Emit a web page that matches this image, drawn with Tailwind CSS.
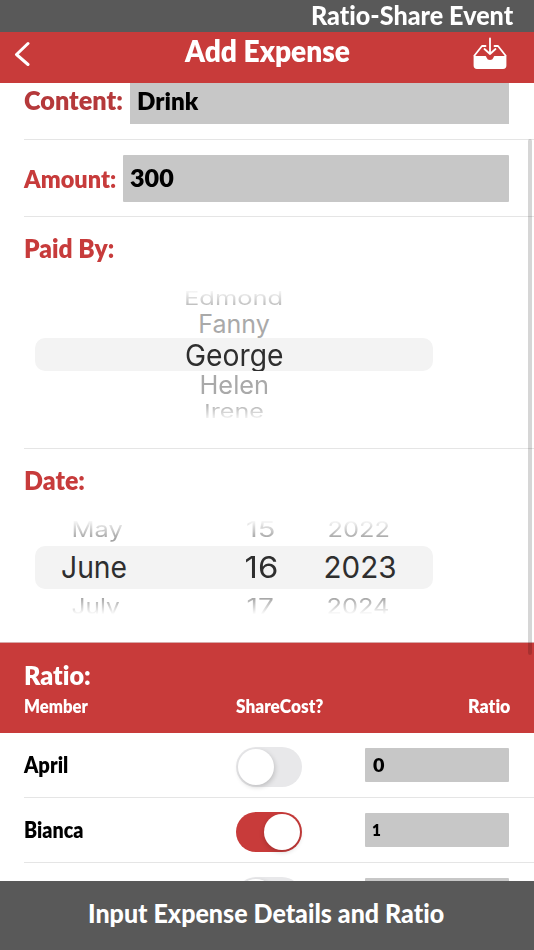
<!DOCTYPE html>
<html lang="en">
<head>
    <meta charset="UTF-8">
    <meta name="viewport" content="width=device-width, initial-scale=1.0">
    <title>Add Expense</title>
    <script src="https://cdn.jsdelivr.net/npm/@tailwindcss/browser@4"></script>
</head>
<body class="bg-white">

    <div class="w-[534px] h-[950px] flex flex-col overflow-hidden relative font-['Lato',sans-serif] font-extrabold whitespace-nowrap [font-variant-ligatures:none]">

        <!-- Event bar -->
        <div class="h-8 shrink-0 bg-[#595959] text-white flex items-start justify-end pr-[21px]">
            <span class="fit text-[26px] leading-[31px] font-black inline-block origin-right" data-w="202">Ratio-Share Event</span>
        </div>

        <!-- Title bar -->
        <div class="h-[51px] shrink-0 bg-[#c83b3a] text-white flex pl-[14px] pr-[27px] z-10">
            <svg class="w-4 h-[26px] mt-[9px]" viewBox="0 0 16 26" fill="none" stroke="white" stroke-width="3" stroke-linecap="round" stroke-linejoin="round">
                <path d="M14 2.500 2.500 13.500 14 23.500" />
            </svg>
            <h1 class="ml-[155px] text-[30px] leading-[37px]"><span class="fit inline-block origin-left" data-w="165">Add Expense</span></h1>
            <svg class="w-[34px] h-[34px] mt-[4px] ml-auto" viewBox="0 0 34 34" fill="none" stroke="white" stroke-width="1.8" stroke-linecap="round" stroke-linejoin="round">
                <path d="M17 2.500v15.500M11.500 13l5.500 5 5.500-5" />
                <path d="M12.500 10H9L1.500 19.500M21.500 10H25l7.500 9.500" />
                <path d="M1.500 20H12c1 0 1.200.5 1.500 1.500a3.700 3.700 0 0 0 7 0c.3-1 .5-1.500 1.500-1.500h10.500v9.500a2.500 2.500 0 0 1-2.500 2.500H4a2.500 2.500 0 0 1-2.500-2.500z" fill="white" stroke="none" />
                <path d="M1.500 20v9.500A2.500 2.500 0 0 0 4 32h26a2.500 2.500 0 0 0 2.500-2.500V20" />
            </svg>
        </div>

        <!-- Form -->
        <div class="flex-1 min-h-0 overflow-hidden">
            <div class="h-[56px] pl-6 pr-[25px] flex items-start">
                <label class="w-[106px] text-[27px] leading-[34px] text-[#b5393b]"><span class="fit inline-block origin-left" data-w="99">Content:</span></label>
                <div class="flex-1 h-[41px] bg-[#c7c7c7] pl-[7px] text-[25px] leading-[35px]"><span class="fit inline-block origin-left" data-w="61">Drink</span></div>
            </div>
            <div class="ml-6 border-t border-[#e5e5e5] h-[77px] pr-[25px] pt-[15px] flex items-start">
                <label class="w-[99px] text-[25px] leading-[46px] text-[#c73b3b]"><span class="fit inline-block origin-left" data-w="92">Amount:</span></label>
                <div class="flex-1 h-[47px] bg-[#c7c7c7] rounded-[1px] pl-[7px] text-[24px] leading-[46px]"><span class="fit inline-block origin-left" data-w="44">300</span></div>
            </div>

            <!-- Payer wheel -->
            <div class="ml-6 border-t border-[#e5e5e5] h-[232px] pt-[13px]">
                <div class="text-[27px] leading-9 text-[#c73b3b]"><span class="fit inline-block origin-left" data-w="90">Paid By:</span></div>
                <div class="ml-[11px] mt-[22px] w-[398px] h-[134px] overflow-hidden flex flex-col items-center font-['Inter',sans-serif] font-normal">
                    <div class="h-[22px] flex items-center"><span class="fit block text-[26px] leading-8 text-transparent bg-clip-text bg-linear-to-b from-white from-5% to-[#bcbcbc] to-80%" data-w="99" data-y="0.72">Edmond</span></div>
                    <div class="h-[28px] flex items-center"><span class="fit block text-[25px] leading-8 text-[#a9a9a9]" data-w="71">Fanny</span></div>
                    <div class="w-full h-[33px] bg-[#f3f3f3] rounded-[10px] flex justify-center overflow-hidden"><span class="fit block text-[30px] leading-[34px] text-[#2e2e2e]" data-w="99">George</span></div>
                    <div class="h-[28px] flex items-center"><span class="fit block text-[25px] leading-8 text-[#a9a9a9]" data-w="70">Helen</span></div>
                    <div class="h-[22px] flex items-center"><span class="fit block text-[26px] leading-8 translate-y-[2px] text-transparent bg-clip-text bg-linear-to-b from-[#b4b4b4] from-20% to-white to-90%" data-w="60" data-y="0.72">Irene</span></div>
                </div>
            </div>

            <!-- Date wheels -->
            <div class="ml-6 border-t border-[#e5e5e5] h-[194px] pt-[13px]">
                <div class="text-[27px] leading-9 text-[#c73b3b]"><span class="fit inline-block origin-left" data-w="61">Date:</span></div>
                <div class="ml-[11px] mt-[21px] w-[398px] h-[96px] overflow-hidden font-['Inter',sans-serif] font-normal">
                    <div class="h-[27px] grid grid-cols-[124px_205px_69px] items-center text-[25px] leading-8 text-transparent">
                        <div class="flex justify-center"><span class="fit block translate-y-[-6px] bg-clip-text bg-linear-to-b from-white from-15% to-[#a4a4a4] to-85%" data-w="51" data-y="0.85">May</span></div>
                        <div class="flex justify-center"><span class="fit block translate-y-[-6px] translate-x-[-1px] bg-clip-text bg-linear-to-b from-white from-15% to-[#a4a4a4] to-85%" data-w="29" data-y="0.85">15</span></div>
                        <div class="flex justify-center"><span class="fit block translate-y-[-6px] translate-x-[-40px] bg-clip-text bg-linear-to-b from-white from-15% to-[#a4a4a4] to-85%" data-w="63" data-y="0.85">2022</span></div>
                    </div>
                    <div class="h-[43px] bg-[#f3f3f3] rounded-[10px] grid grid-cols-[124px_205px_69px] items-center text-[30px] leading-[43px] text-[#2e2e2e]">
                        <div class="flex justify-center"><span class="fit block translate-x-[-3px]" data-w="66">June</span></div>
                        <div class="flex justify-center"><span class="fit block" data-w="34">16</span></div>
                        <div class="flex justify-center"><span class="fit block translate-x-[-38px]" data-w="73">2023</span></div>
                    </div>
                    <div class="h-[26px] grid grid-cols-[124px_205px_69px] items-center text-[25px] leading-8 text-transparent">
                        <div class="flex justify-center"><span class="fit block translate-y-[1px] translate-x-[-1px] bg-clip-text bg-linear-to-b from-[#9c9c9c] from-15% to-white to-80%" data-w="48" data-y="0.88">July</span></div>
                        <div class="flex justify-center"><span class="fit block translate-y-[1px] translate-x-[-1px] bg-clip-text bg-linear-to-b from-[#9c9c9c] from-15% to-white to-80%" data-w="27" data-y="0.88">17</span></div>
                        <div class="flex justify-center"><span class="fit block translate-y-[1px] translate-x-[-40px] bg-clip-text bg-linear-to-b from-[#9c9c9c] from-15% to-white to-80%" data-w="63" data-y="0.88">2024</span></div>
                    </div>
                </div>
            </div>

            <!-- Ratio header -->
            <div class="h-[91px] bg-[#c83b3a] border-t border-[#d8a9a9] text-white pl-6 pr-6 pt-[14px]">
                <div class="text-[27px] leading-9"><span class="fit inline-block origin-left" data-w="67">Ratio:</span></div>
                <div class="grid grid-cols-[212px_1fr_auto] text-[19px] leading-[26px]">
                    <div><span class="fit inline-block origin-left" data-w="64">Member</span></div>
                    <div><span class="fit inline-block origin-left" data-w="87">ShareCost?</span></div>
                    <div><span class="fit inline-block origin-right" data-w="42">Ratio</span></div>
                </div>
            </div>

            <!-- Member rows -->
            <div class="h-[64px] pl-6 pr-[25px] flex items-start">
                <div class="w-[212px] text-[22px] leading-[64px]"><span class="fit inline-block origin-left" data-w="44">April</span></div>
                <div class="mt-[14px] w-[66px] h-10 rounded-full bg-[#e8e8ea] p-[2px]">
                    <div class="size-9 rounded-full bg-white shadow-[1px_2px_5px_rgba(0,0,0,0.18)]"></div>
                </div>
                <div class="ml-auto mt-[15px] w-36 h-[34px] rounded-[1px] bg-[#c7c7c7] pl-2 text-[18px] leading-[34px]"><span class="fit inline-block origin-left" data-w="11">0</span></div>
            </div>
            <div class="ml-6 border-t border-[#e5e5e5] h-[65px] pr-[25px] flex items-start">
                <div class="w-[212px] text-[22px] leading-[64px]"><span class="fit inline-block origin-left" data-w="59">Bianca</span></div>
                <div class="mt-[14px] w-[66px] h-10 rounded-full bg-[#c83b3a] p-[2px] flex justify-end">
                    <div class="size-9 rounded-full bg-white shadow-[0_2px_5px_rgba(0,0,0,0.18)]"></div>
                </div>
                <div class="ml-auto mt-[15px] w-36 h-[34px] rounded-[1px] bg-[#c7c7c7] pl-[7px] text-[17px] leading-[33px]"><span class="fit inline-block origin-left" data-w="9">1</span></div>
            </div>
            <div class="ml-6 border-t border-[#e5e5e5] h-[65px] pr-[25px] flex items-start">
                <div class="ml-[212px] mt-[14px] w-[66px] h-10 rounded-full bg-[#e8e8ea] p-[2px]">
                    <div class="size-9 rounded-full bg-white shadow-[1px_2px_5px_rgba(0,0,0,0.18)]"></div>
                </div>
                <div class="ml-auto mt-[15px] w-36 h-[34px] rounded-[1px] bg-[#c7c7c7]"></div>
            </div>
        </div>

        <!-- Scroll indicator -->
        <div class="absolute left-[528px] top-[139px] w-1 h-[516px] rounded-full bg-black/16"></div>

        <!-- Footer hint -->
        <div class="h-[69px] shrink-0 bg-[#595959] text-white flex justify-center">
            <span class="fit block text-[27px] leading-[63px] font-black translate-x-[-1px]" data-w="356">Input Expense Details and Ratio</span>
        </div>
    </div>

    <script>
        // Squeeze or stretch a label to its target width in pixels
        function fit(el) {
            if (!el.offsetWidth) return;
            const ratio = Number(el.dataset.w) / el.offsetWidth;
            el.style.scale = `${ratio} ${el.dataset.y || 1}`;
        }

        // Refit whenever fonts or styles change a label's natural size
        const observer = new ResizeObserver((entries) => {
            entries.forEach((entry) => fit(entry.target));
        });
        document.querySelectorAll('.fit').forEach((el) => observer.observe(el));
    </script>

</body>
</html>
